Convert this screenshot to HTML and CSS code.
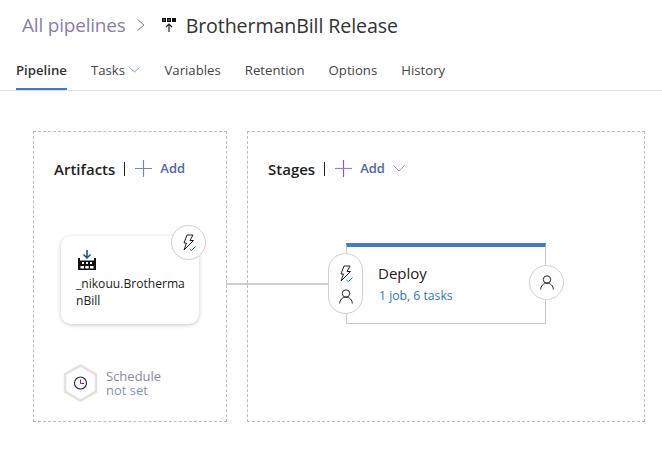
FILE: index.html
```html
<!DOCTYPE html>
<html lang="en">
<head>
<meta charset="utf-8">
<title>BrothermanBill Release</title>
<link rel="stylesheet" href="styles.css">
</head>
<body>
<header class="titlebar">
  <span class="crumb">All pipelines</span>
  <svg class="crumb-sep" width="10" height="14" viewBox="0 0 10 14"><path d="M1.5 1.5 8 7l-6.500 5.500" fill="none" stroke="#777" stroke-width="1"/></svg>
  <svg class="release-icon" width="16" height="16" viewBox="0 0 16 16"><path d="M1 1h4v4H1zM6 1h4v4H6zM11 1h4v4h-4z" fill="#111"/><path d="M2.500 2.500h1v1h-1zM7.500 2.500h1v1h-1z" fill="#fff"/><path d="M8 15V7M5 10l3-3 3 3" fill="none" stroke="#222" stroke-width="1.200"/></svg>
  <h1 class="title">BrothermanBill Release</h1>
</header>
<nav class="tabs">
  <a class="tab active">Pipeline</a>
  <a class="tab">Tasks <svg class="tab-caret" width="11" height="6" viewBox="0 0 11 6"><path d="M.5.500 5.500 5l5-4.500" fill="none" stroke="#7a9cc6" stroke-width="1"/></svg></a>
  <a class="tab">Variables</a>
  <a class="tab">Retention</a>
  <a class="tab">Options</a>
  <a class="tab">History</a>
</nav>
<main class="canvas">
  <section class="panel artifacts">
    <div class="panel-head">
      <h2 class="panel-title">Artifacts</h2>
      <span class="panel-rule"></span>
      <svg class="plus" width="17" height="17" viewBox="0 0 17 17"><path d="M8.500 0v17M0 8.500h17" stroke="#7b86b8" stroke-width="1.200"/></svg>
      <span class="add">Add</span>
    </div>
    <div class="artifact-card">
      <svg class="artifact-icon" width="20" height="21" viewBox="0 0 20 21"><path d="M10 0v7" stroke="#16466f" stroke-width="1.500"/><path d="M6.500 4.500 10 8l3.500-3.500" fill="none" stroke="#16466f" stroke-width="1.400"/><path d="M1 8h2v2.500h14V8h2v12H1z" fill="#111"/><path d="M5 12h2v2H5zM9 12h2v2H9zM13 12h2v2h-2zM3.500 16h3.500v2.500H3.500zM8.300 16h3.400v2.500H8.300zM13 16h3.500v2.500H13z" fill="#fff"/></svg>
      <div class="artifact-name">_nikouu.Brotherma<br>nBill</div>
      <span class="round-badge trigger">
        <svg width="16" height="18" viewBox="0 0 16 18"><path d="M6 1h6L9 6.500h3.500L3 16l2.500-7H3z" fill="none" stroke="#222" stroke-width="1"/><path d="M8.500 15l2 1.500 4-4" fill="none" stroke="#2b6cb0" stroke-width="1"/></svg>
      </span>
    </div>
    <div class="schedule">
      <svg class="hex" width="35" height="38" viewBox="0 0 35 38"><path d="M17.500 1.500 33 10.300v17.400L17.500 36.500 2 27.700V10.300z" fill="#fff" stroke="#e2e2e2" stroke-width="2.500"/><circle cx="17.500" cy="19" r="6" fill="none" stroke="#2a2a4a" stroke-width="1.100"/><path d="M17.500 15.500V19.500H21" fill="none" stroke="#7a2a8a" stroke-width="1"/></svg>
      <div class="schedule-text"><span>Schedule</span><span class="schedule-sub">not set</span></div>
    </div>
  </section>
  <section class="panel stages">
    <div class="panel-head">
      <h2 class="panel-title">Stages</h2>
      <span class="panel-rule"></span>
      <svg class="plus" width="17" height="17" viewBox="0 0 17 17"><path d="M8.500 0v17" stroke="#8a5fb5" stroke-width="1.200"/><path d="M0 8.500h17" stroke="#8d8da8" stroke-width="1.200"/></svg>
      <span class="add">Add</span>
      <svg class="add-caret" width="12" height="7" viewBox="0 0 12 7"><path d="M.5.500 6 6 11.500.500" fill="none" stroke="#a99ac4" stroke-width="1"/></svg>
    </div>
    <div class="stage-card">
      <div class="stage-name">Deploy</div>
      <div class="stage-meta">1 job, 6 tasks</div>
      <span class="pill">
        <svg width="16" height="18" viewBox="0 0 16 18"><path d="M6 1h6L9 6.500h3.500L3 16l2.500-7H3z" fill="none" stroke="#222" stroke-width="1"/><path d="M8.500 15l2 1.500 4-4" fill="none" stroke="#2b6cb0" stroke-width="1"/></svg>
        <svg width="14" height="15" viewBox="0 0 14 15"><circle cx="7" cy="4.500" r="3.700" fill="none" stroke="#223" stroke-width="1"/><path d="M.7 14.500c0-3.500 2.500-6.300 6.300-6.300s6.300 2.800 6.300 6.300" fill="none" stroke="#223" stroke-width="1"/></svg>
      </span>
      <span class="round-badge approver">
        <svg width="14" height="15" viewBox="0 0 14 15"><circle cx="7" cy="4.500" r="3.700" fill="none" stroke="#223" stroke-width="1"/><path d="M.7 14.500c0-3.500 2.500-6.300 6.300-6.300s6.300 2.800 6.300 6.300" fill="none" stroke="#223" stroke-width="1"/></svg>
      </span>
    </div>
  </section>
  <div class="connector"></div>
</main>
</body>
</html>
```
FILE: styles.css
```css
* { box-sizing: border-box; }
html, body { margin: 0; height: 100%; }
body {
  width: 662px;
  height: 450px;
  overflow: hidden;
  background: #fff;
  color: #222;
  font-family: "Open Sans", "Liberation Sans", sans-serif;
}
.titlebar {
  display: flex;
  align-items: center;
  height: 52px;
  padding: 0 0 2px 22px;
}
.crumb { font-size: 19px; color: #8a7fa8; letter-spacing: -0.2px; }
.crumb-sep { margin-left: 10px; }
.release-icon { margin-left: 15px; }
.title { margin: 0 0 0 9px; font-size: 19.600px; font-weight: 400; color: #333; letter-spacing: -0.1px; }
.tabs {
  display: flex;
  height: 39px;
  padding-left: 16px;
  gap: 24px;
  border-bottom: 1px solid #dcdcdc;
}
.tab {
  height: 38px;
  padding-top: 9px;
  font-size: 13.200px;
  color: #444;
  white-space: nowrap;
}
.tab.active {
  font-weight: 600;
  color: #333;
  border-bottom: 2px solid #3f7ad0;
}
.tab-caret { margin-left: 1px; vertical-align: 2px; }
.canvas {
  position: relative;
  display: flex;
  gap: 20px;
  padding: 40px 0 0 33px;
}
.panel {
  position: relative;
  height: 291px;
  border: 1px dashed #bdbdbd;
}
.artifacts { width: 194px; }
.stages { width: 398px; }
.panel-head {
  display: flex;
  align-items: center;
  height: 20px;
  margin: 27px 0 0 20px;
}
.panel-title { margin: 0; font-size: 15px; font-weight: 600; color: #222; }
.panel-rule { width: 1px; height: 14px; margin-left: 9px; background: #222; }
.plus { margin: -2px 0 0 10px; }
.add { margin: -2px 0 0 8px; font-size: 13px; font-weight: 600; color: #4f6aa8; }
.add-caret { margin: -1px 0 0 8px; }
.artifact-card {
  position: relative;
  width: 138px;
  height: 88px;
  margin: 57px 0 0 27px;
  padding: 14px 0 0 15px;
  border-radius: 10px;
  background: #fff;
  box-shadow: 0 1px 4px rgba(0, 0, 0, .22);
}
.artifact-icon { display: block; margin-left: 1px; }
.artifact-name { margin-top: 4px; font-size: 12.100px; line-height: 17px; color: #222; white-space: nowrap; }
.round-badge {
  position: absolute;
  display: flex;
  align-items: center;
  justify-content: center;
  width: 35px;
  height: 35px;
  border: 1px solid #d0d0d0;
  border-radius: 50%;
  background: #fff;
}
.trigger { top: -11px; right: -7px; }
.schedule {
  display: flex;
  align-items: center;
  gap: 8px;
  margin: 40px 0 0 29px;
}
.schedule-text { display: flex; flex-direction: column; font-size: 13px; line-height: 14px; color: #8a8a9a; }
.schedule-sub { color: #8a90b8; }
.stage-card {
  position: relative;
  width: 200px;
  height: 81px;
  margin: 64px 0 0 98px;
  padding: 16px 0 0 31px;
  border-top: 4px solid #3f7ad0;
  border-right: 1px solid #c8c8c8;
  border-bottom: 1px solid #c8c8c8;
  border-left: 1px solid #c8c8c8;
  background: #fff;
}
.stage-name { font-size: 15px; line-height: 20px; color: #222; }
.stage-meta { margin: 5px 0 0 1px; font-size: 12.200px; line-height: 16px; color: #2f77b8; }
.pill {
  position: absolute;
  top: 6px;
  left: -19px;
  display: flex;
  flex-direction: column;
  align-items: center;
  gap: 6px;
  width: 35px;
  height: 61px;
  padding-top: 11px;
  border: 1px solid #d0d0d0;
  border-radius: 18px;
  background: #fff;
}
.approver { top: 18px; right: -19px; }
.connector {
  position: absolute;
  top: 192px;
  left: 226px;
  width: 103px;
  height: 2px;
  background: #d0d0d0;
}
```
